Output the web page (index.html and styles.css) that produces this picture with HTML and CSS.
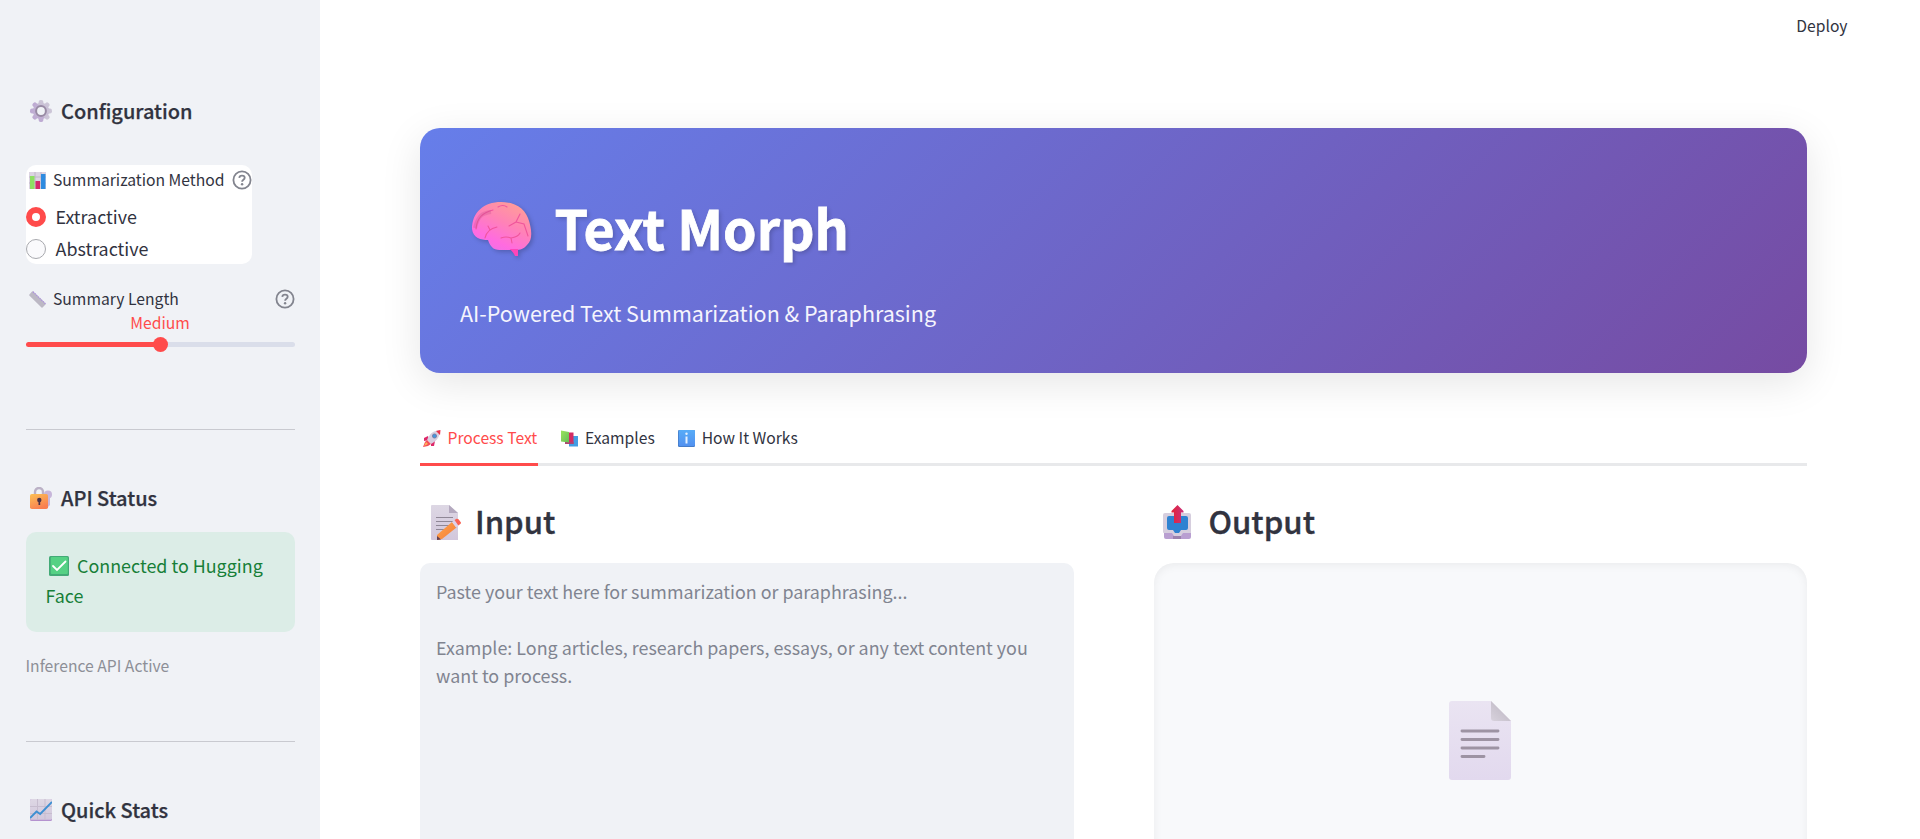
FILE: index.html
```html
<!DOCTYPE html>
<html lang="en">
<head>
<meta charset="utf-8">
<title>Text Morph</title>
<link rel="stylesheet" href="styles.css">
</head>
<body>
<svg class="defs" width="0" height="0" aria-hidden="true">
  <defs>
    <linearGradient id="paper" x1="0" y1="0" x2="0" y2="1"><stop offset="0" stop-color="#ddd7e4"/><stop offset="1" stop-color="#d2c7dc"/></linearGradient>
    <linearGradient id="orange" x1="0" y1="0" x2="0.5" y2="1"><stop offset="0" stop-color="#fcc154"/><stop offset="1" stop-color="#f97f52"/></linearGradient>
    <linearGradient id="pencil" x1="0" y1="0" x2="1" y2="1"><stop offset="0" stop-color="#ffa64a"/><stop offset="1" stop-color="#f47a3a"/></linearGradient>
    <linearGradient id="brain" x1="0.85" y1="0" x2="0.25" y2="1"><stop offset="0" stop-color="#ffa193"/><stop offset="0.45" stop-color="#ff82b7"/><stop offset="0.8" stop-color="#ff6be0"/><stop offset="1" stop-color="#ed70e8"/></linearGradient>
    <linearGradient id="gear" x1="0" y1="0" x2="0" y2="1"><stop offset="0" stop-color="#cdc7d7"/><stop offset="1" stop-color="#bda9d2"/></linearGradient>
    <linearGradient id="arrow" x1="0" y1="0" x2="1" y2="0"><stop offset="0" stop-color="#e42335"/><stop offset="1" stop-color="#c9307d"/></linearGradient>
    <linearGradient id="green" x1="0" y1="0" x2="1" y2="1"><stop offset="0" stop-color="#9be45d"/><stop offset="1" stop-color="#65bd57"/></linearGradient>
    <linearGradient id="blue" x1="0" y1="0" x2="0" y2="1"><stop offset="0" stop-color="#57acf8"/><stop offset="1" stop-color="#5291f0"/></linearGradient>
    <linearGradient id="lilac" x1="0" y1="0" x2="0" y2="1"><stop offset="0" stop-color="#eae4f2"/><stop offset="1" stop-color="#e2d9ee"/></linearGradient>
    <linearGradient id="fold" x1="0" y1="1" x2="1" y2="0"><stop offset="0" stop-color="#d8d2dd"/><stop offset="0.6" stop-color="#c5bfca"/></linearGradient>
    <symbol id="help" viewBox="0 0 20 20"><circle cx="10" cy="10" r="8.6" fill="none" stroke="#82848e" stroke-width="1.8"/><path d="M7.300 7.900c.1-1.600 1.300-2.300 2.700-2.300 1.600 0 2.700.8 2.700 2.200 0 2-2.600 2-2.600 4" fill="none" stroke="#82848e" stroke-width="1.8"/><circle cx="10.100" cy="14.200" r="1.200" fill="#82848e"/></symbol>
  </defs>
</svg>
<div class="app">
  <aside class="sidebar">
    <h3 class="side-title"><svg class="ico22" viewBox="0 0 22 22"><g fill="url(#gear)"><circle cx="11" cy="11" r="8.200"/><rect x="8.600" y="0" width="4.800" height="22" rx="2"/><rect x="8.600" y="0" width="4.800" height="22" rx="2" transform="rotate(45 11 11)"/><rect x="8.600" y="0" width="4.800" height="22" rx="2" transform="rotate(90 11 11)"/><rect x="8.600" y="0" width="4.800" height="22" rx="2" transform="rotate(135 11 11)"/></g><circle cx="11" cy="11" r="4.900" fill="#f0f2f6" stroke="#988aa4" stroke-width="2"/></svg><span>Configuration</span></h3>
    <section class="method">
      <div class="label"><svg class="ico17" viewBox="0 0 17 17"><path fill="#dcd4e2" d="M0 0h17v17H0z"/><path d="M0 5h17M0 11h17M6 0v17M12 0v17" stroke="#b9aec4" stroke-width=".8"/><path fill="#8edf63" d="M1 4h4.500v13H1z"/><path fill="#d4296b" d="M6.500 9h4.500v8H6.500z"/><path fill="#2d8be0" d="M12 2h4.500v15H12z"/></svg><span>Summarization Method</span><svg class="help"><use href="#help"/></svg></div>
      <div class="radio"><i class="dot on"></i><span>Extractive</span></div>
      <div class="radio"><i class="dot"></i><span>Abstractive</span></div>
    </section>
    <section class="length">
      <div class="label"><svg class="ico17" viewBox="0 0 17 17"><path d="M4 .3 16.700 12.500Q17 13 16.500 13.500L13.500 16.600Q13 17 12.500 16.500L.3 4.500Q0 4 .4 3.500L3 .5Q3.500 0 4 .3Z" fill="#bcb8c4"/><path d="m4 .8 12.400 12" stroke="#ac8fe0" stroke-width="1.200" stroke-dasharray="1.300 1"/></svg><span>Summary Length</span><svg class="help"><use href="#help"/></svg></div>
      <div class="value">Medium</div>
      <div class="slider"><i class="thumb"></i></div>
    </section>
    <hr class="rule">
    <h3 class="side-title api"><svg class="ico22" viewBox="0 0 22 22"><path d="M5 9V5a4 4 0 0 1 8 0v4" fill="none" stroke="#bbb1c6" stroke-width="2.400"/><g fill="#c7b6da"><circle cx="18" cy="7.500" r="4"/><path d="M16 10h4v8l-2 2-2-2z"/></g><rect y="7" width="18" height="15" rx="1.800" fill="url(#orange)"/><circle cx="9.300" cy="13" r="2.200" fill="#4b3348"/><path d="M8.500 13h1.700v5H8.500z" fill="#4b3348"/></svg><span>API Status</span></h3>
    <div class="success"><svg class="check" viewBox="0 0 20 20"><rect width="20" height="20" rx="1.500" fill="#43aa77"/><rect x="1.800" y="1" width="17" height="17" rx="1" fill="#55d184"/><path d="m4 10 4 4 8.500-8.500" fill="none" stroke="#fff" stroke-width="1.800" stroke-linecap="round"/></svg>Connected to Hugging<br>Face</div>
    <p class="caption">Inference API Active</p>
    <hr class="rule">
    <h3 class="side-title stats"><svg class="ico22" viewBox="0 0 22 22"><rect width="22" height="22" rx="1.500" fill="#b592cf"/><rect width="22" height="20.800" rx="1.500" fill="url(#paper)"/><path d="M0 7.500h22M0 14.500h22M7.500 0v21M15 0v21" stroke="#c7bdcf" stroke-width="1"/><path d="m0 19 6.500-6.500 3.700 2.500L22 3" fill="none" stroke="#3e8fd2" stroke-width="1.900"/></svg><span>Quick Stats</span></h3>
  </aside>
  <main class="main">
    <header class="topbar">Deploy</header>
    <section class="hero">
      <h1 class="hero-title"><svg class="brain" viewBox="0 0 60 54"><path d="M29 0C43 0 52 6 56 16c4 11 5 22-1 27-3 4-7 5-11 5H30c-7 0-11-1-14-10-7 0-15-2-16-11C0 10 12 0 29 0Z" fill="url(#brain)"/><path d="M37.500 47H46v7h-3c-1-3-3-5-5.500-7Z" fill="#ff45b9"/><g fill="none" stroke="#f0559c" stroke-width="1.100" stroke-linecap="round"><path d="M4 27C5 16 10 11 21 8M26 5q5-3 9 0M37 24l7-4 4-8M44 20l8 2 4 12M29 36q5-2 10 0 7-1 9-5M39 36l1 5M13 36q2-9 12-11M16 24l2 4"/></g><path d="M3 26C6 13 11 11 19 10" fill="none" stroke="#c6508e" stroke-opacity=".3" stroke-width="4"/></svg><span>Text Morph</span></h1>
      <p class="hero-sub">AI-Powered Text Summarization &amp; Paraphrasing</p>
    </section>
    <nav class="tabs">
      <div class="tab active"><svg class="ico18" viewBox="0 0 18 17"><path d="M5 6 1 8v3l5-1zM12 11l-1 5H8V12z" fill="#dd2869"/><path d="M17 0C10 1 7 3 4 10l4 4C15 10 17 6 17 0Z" fill="#d9cfe0"/><path d="M17.500 0 13 1l4 4z" fill="#ed2f48"/><circle cx="11.500" cy="6" r="2.100" fill="#4595dd" stroke="#716f92" stroke-width=".7"/><path d="m4 10 4 4-3 2-5 1 2-5z" fill="#f34e59"/><path d="m3 12 2 2-4 2z" fill="#ffb457"/></svg><span>Process Text</span></div>
      <div class="tab"><svg class="ico17" viewBox="0 0 17 17"><path d="M8 6h9v10.500H8z" fill="#429de3"/><path d="M4 2.500h8.500V14H4z" fill="#d32b63"/><path d="M4 12h8.500v2H4z" fill="#ad4472"/><path d="M0 .5 8 2v10.500L0 11.500z" fill="url(#green)"/></svg><span>Examples</span></div>
      <div class="tab"><svg class="ico17" viewBox="0 0 17 17"><rect width="17" height="17" rx="1.300" fill="#457cc8"/><rect x=".8" width="16.200" height="16" rx="1.300" fill="url(#blue)"/><path d="M8.500 6.500v7" stroke="#e5f1ff" stroke-width="2"/><circle cx="8.500" cy="3.800" r="1.200" fill="#e5f1ff"/></svg><span>How It Works</span></div>
    </nav>
    <div class="columns">
      <section class="column">
        <h2 class="heading"><svg class="memo" viewBox="0 0 30 35"><path d="M1 0h17l9 8v27H1Q0 35 0 34V1Q0 0 1 0Z" fill="url(#paper)"/><path d="M18 0v8h9z" fill="#b4a9bf"/><path d="M5 12.500h17M5 16.500h17M5 20.500h14M5 24.500h8" stroke="#8f8796" stroke-width="1"/><path d="m6 30 15-13 4.500 5.500L11 34l-5 1z" fill="url(#pencil)"/><path d="m6 31 4 3.500-4 .5z" fill="#654052"/><path d="m21 17 2.500-2 4 5-2.500 2.500z" fill="#ded1e8"/><path d="m23.500 15 2-1.200q1-.5 2 .5l2.300 3q.5 1-.5 1.700l-2 1.500z" fill="#fa6254"/></svg><span>Input</span></h2>
        <div class="textarea">Paste your text here for summarization or paraphrasing...<br><br>Example: Long articles, research papers, essays, or any text content you<br>want to process.</div>
      </section>
      <section class="column">
        <h2 class="heading output"><svg class="outbox" viewBox="0 0 28 34"><path d="M1 25h27v7q0 2-2 2H3q-2 0-2-2z" fill="#b99fd1"/><path d="M10 31h8v3h-8z" fill="#9b81ae"/><path d="M2 8h24q2 0 2 2v18h-8l-2 3h-7l-2-3H1Q0 28 0 27V10q0-2 2-2Z" fill="#d6cede"/><path d="M6 11h17q2 0 2 2v10q0 2-2 2h-5l-2 3h-4l-2-3H6q-2 0-2-2V13q0-2 2-2Z" fill="#2e82d1"/><path d="m14.500 0 6 6v1.500H18V18h-7V7.500H8.500V6z" fill="url(#arrow)"/></svg><span>Output</span></h2>
        <div class="result"><svg class="doc" viewBox="0 0 62 79"><path d="M3 0h39l20 20v56q0 3-3 3H3q-3 0-3-3V3Q0 0 3 0Z" fill="url(#lilac)"/><path d="M42 0v17q0 3 3 3h17z" fill="url(#fold)"/><path d="M13 30h36M13 38.500h36M13 47h36M13 55.500h22" stroke="#9d93a3" stroke-width="2.900" stroke-linecap="round"/></svg></div>
      </section>
    </div>
  </main>
</div>
</body>
</html>
```
FILE: styles.css
```css
* { box-sizing: border-box; }
body { margin: 0; height: 839px; overflow: hidden; background: #fff; color: #31333f; font-family: "Noto Sans CJK SC", "Noto Sans", sans-serif; font-size: 17.9px; line-height: 30px; }
h1, h2, h3, p { margin: 0; }
svg { flex: none; display: block; }
.defs { position: absolute; }
.app { display: flex; height: 839px; overflow: hidden; }

.sidebar { width: 320px; flex: none; background: #f0f2f6; padding: 96px 25px 0 26px; }
.side-title { display: flex; align-items: center; gap: 9px; height: 30px; padding-left: 4px; font-size: 20px; font-weight: 500; line-height: 30px; -webkit-text-stroke: .25px; }
.side-title span { padding-bottom: 1px; }
.ico22 { width: 22px; height: 22px; }
.ico17 { width: 17px; height: 17px; }
.ico18 { width: 18px; height: 17px; }
.method { width: 226px; height: 99px; margin-top: 39px; background: #fff; border-radius: 10px; }
.label { display: flex; align-items: center; height: 30px; padding-left: 3px; font-size: 15.7px; }
.label .ico17 { margin-right: 7px; }
.help { width: 20px; height: 20px; margin-left: auto; }
.radio { display: flex; align-items: center; gap: 9.5px; height: 32px; }
.radio span { padding-bottom: 3px; }
.method .label + .radio { margin-top: 6px; }
.dot { width: 20px; height: 20px; border-radius: 50%; border: 1.5px solid #a8a9ae; background: #fafafc; }
.dot.on { border: 6px solid #ff4b4b; background: #fff; }
.length { margin-top: 20px; height: 145px; }
.value { height: 20px; margin-top: -1px; padding-right: 1px; text-align: center; color: #ff4b4b; font-size: 15.7px; line-height: 20px; }
.slider { display: flex; align-items: center; justify-content: center; height: 5px; margin-top: 9px; border-radius: 3px; background: linear-gradient(90deg, #ff4b4b 50%, #dadeea 50%); }
.thumb { width: 15px; height: 15px; flex: none; border-radius: 50%; background: #ff4b4b; }
.rule { height: 1px; margin: 0; border: 0; background: #c9cad0; }
.api { margin-top: 53px; }
.success { height: 100px; margin-top: 19px; padding: 18px 19px 20px 19.5px; background: #dcede7; border-radius: 10px; color: #177f38; }
.check { display: inline-block; width: 20px; height: 20px; margin: 0 8px 0 3.5px; vertical-align: -3px; }
.caption { margin: 19px 0 60px -.5px; color: #8d8f97; font-size: 15.7px; line-height: 30px; }
.stats { margin-top: 53px; }

.main { flex: 1; padding: 0 113px 0 100px; }
.topbar { height: 128px; padding-top: 11px; margin-right: -40.5px; text-align: right; font-size: 15.65px; }
.hero { height: 245px; padding: 60px 40px 0; border-radius: 20px; background: linear-gradient(135deg, #667eea 0%, #764ba2 100%); box-shadow: 0 10px 40px rgba(0, 0, 0, .1); color: #fff; }
.hero-title { display: flex; align-items: center; gap: 22.5px; height: 82px; padding-left: 12px; font-size: 53.7px; font-weight: 700; line-height: 78px; text-shadow: 2px 2px 4px rgba(0, 0, 0, .2); -webkit-text-stroke: .8px; }
.hero-title span { padding-bottom: 5px; }
.brain { width: 60px; height: 54px; filter: drop-shadow(2px 2px 2px rgba(0, 0, 0, .2)); }
.hero-sub { margin-top: 25px; font-size: 21.5px; line-height: 36px; color: #f5f4fd; }
.tabs { display: flex; gap: 20px; height: 58px; margin-top: 35px; background: linear-gradient(#e8e9eb, #e8e9eb) bottom / 100% 3px no-repeat; }
.tab { display: flex; align-items: center; gap: 7px; height: 58px; padding: 2px 0 0 3px; font-size: 15.65px; }
.tab.active { gap: 6.5px; width: 118px; padding-top: 5px; color: #ff4b4b; border-bottom: 3px solid #ff4b4b; }
.columns { display: grid; grid-template-columns: 654px 653px; column-gap: 80px; }
.heading { display: flex; align-items: center; gap: 14px; height: 97px; padding: 15px 0 0 11px; font-size: 31.2px; font-weight: 500; -webkit-text-stroke: .35px; }
.heading span { padding-bottom: 2px; }
.output { gap: 17.5px; padding-left: 9px; }
.memo { width: 30px; height: 35px; }
.outbox { width: 28px; height: 34px; }
.textarea { height: 350px; padding: 14px 16px; border-radius: 10px; background: #f0f2f6; color: #808490; line-height: 28px; white-space: nowrap; }
.result { display: flex; justify-content: center; height: 400px; padding: 138px 2px 0 0; border-radius: 20px; background: #f8f9fb; box-shadow: inset 0 2px 10px rgba(0, 0, 0, .06); }
.doc { width: 62px; height: 79px; }
```
